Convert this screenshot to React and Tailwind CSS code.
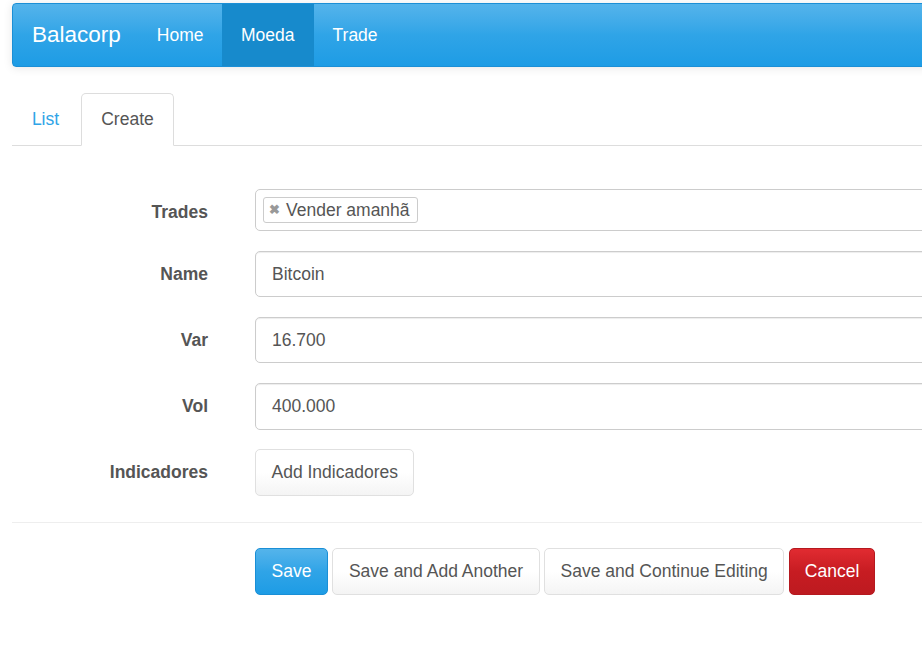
import React from "react";

const font = { fontFamily: '"Liberation Sans", Arial, sans-serif' };

function Row({ label, children, className = "", labelClass = "" }) {
  return (
    <div className={`flex items-center ${className}`}>
      <div className={`w-[196px] shrink-0 text-right font-bold text-[17.5px] text-[#555] ${labelClass}`}>{label}</div>
      <div className="ml-[47px] flex-1">{children}</div>
    </div>
  );
}

function Input({ value, h = "h-[46px]" }) {
  return (
    <div className={`${h} flex items-center rounded-[5px] border border-[#ccc] bg-white px-[16px] text-[17.5px] text-[#555] shadow-[inset_0_1px_1px_rgba(0,0,0,0.075)]`}>
      {value}
    </div>
  );
}

const btnDefault =
  "h-[47px] flex items-center rounded-[5px] border border-[#e0e0e0] bg-gradient-to-b from-white from-50% to-[#f4f4f4] px-[15.5px] text-[17.5px] text-[#555]";

export default function App() {
  return (
    <div className="w-[922px] h-[657px] overflow-hidden bg-white" style={font}>
      <div className="w-[1400px] pl-[12px] pt-[3px]">
        {/* navbar */}
        <div className="flex h-[64px] rounded-[4px] border border-[#1b8fd6] bg-gradient-to-b from-[#54b4eb] via-[#2fa4e7] to-[#1d9ce5] shadow-[0_1px_10px_rgba(0,0,0,0.1)] overflow-hidden">
          <div className="flex items-center pl-[19px] pr-[18px] text-[22.5px] text-white">Balacorp</div>
          <div className="flex items-center pl-[18px] pr-[18.5px] text-[17.5px] text-white">Home</div>
          <div className="flex items-center px-[19px] text-[17.5px] text-white bg-[#178acc]">Moeda</div>
          <div className="flex items-center px-[19px] text-[17.5px] text-white">Trade</div>
        </div>

        {/* tabs */}
        <div className="mt-[26px] flex h-[53px] border-b border-[#ddd]">
          <div className="flex w-[69px] items-center justify-center pr-[2px] text-[17.5px] text-[#2fa4e7]">List</div>
          <div className="-mb-px flex w-[93px] items-center justify-center rounded-t-[5px] border border-[#ddd] border-b-white bg-white text-[17.5px] text-[#555]">
            Create
          </div>
        </div>

        {/* form */}
        <div className="mt-[43px]">
          <Row label="Trades" labelClass="pt-[4px]">
            <div className="flex h-[42px] items-center rounded-[5px] border border-[#ccc] bg-white px-[7px]">
              <div className="flex h-[26px] items-center rounded-[3px] border border-[#ccc] bg-white pl-[5px] pr-[7px] text-[17.5px] text-[#555]">
                <span className="mr-[6px] text-[13px] font-bold text-[#999]">✖</span>
                Vender amanhã
              </div>
            </div>
          </Row>
          <Row label="Name" className="mt-[20px]">
            <Input value="Bitcoin" />
          </Row>
          <Row label="Var" className="mt-[20px]">
            <Input value="16.700" />
          </Row>
          <Row label="Vol" className="mt-[20px]">
            <Input value="400.000" h="h-[47px]" />
          </Row>
          <Row label="Indicadores" className="mt-[19px]">
            <div className="flex">
              <div className={btnDefault}>Add Indicadores</div>
            </div>
          </Row>
        </div>

        <div className="mt-[26px] h-px w-full bg-[#eee]" />

        <div className="mt-[25px] flex pl-[243px]">
          <div className="h-[47px] flex items-center rounded-[5px] border border-[#1a8fd6] bg-gradient-to-b from-[#54b4eb] via-[#2fa4e7] to-[#1d9ce5] px-[15.5px] text-[17.5px] text-white">
            Save
          </div>
          <div className={`${btnDefault} ml-[4.5px]`}>Save and Add Another</div>
          <div className={`${btnDefault} ml-[4.5px]`}>Save and Continue Editing</div>
          <div className="ml-[4.5px] h-[47px] flex items-center rounded-[5px] border border-[#b5191f] bg-gradient-to-b from-[#e12b31] via-[#c71c22] to-[#bd1a20] px-[15px] text-[17.5px] text-white">
            Cancel
          </div>
        </div>
      </div>
    </div>
  );
}
